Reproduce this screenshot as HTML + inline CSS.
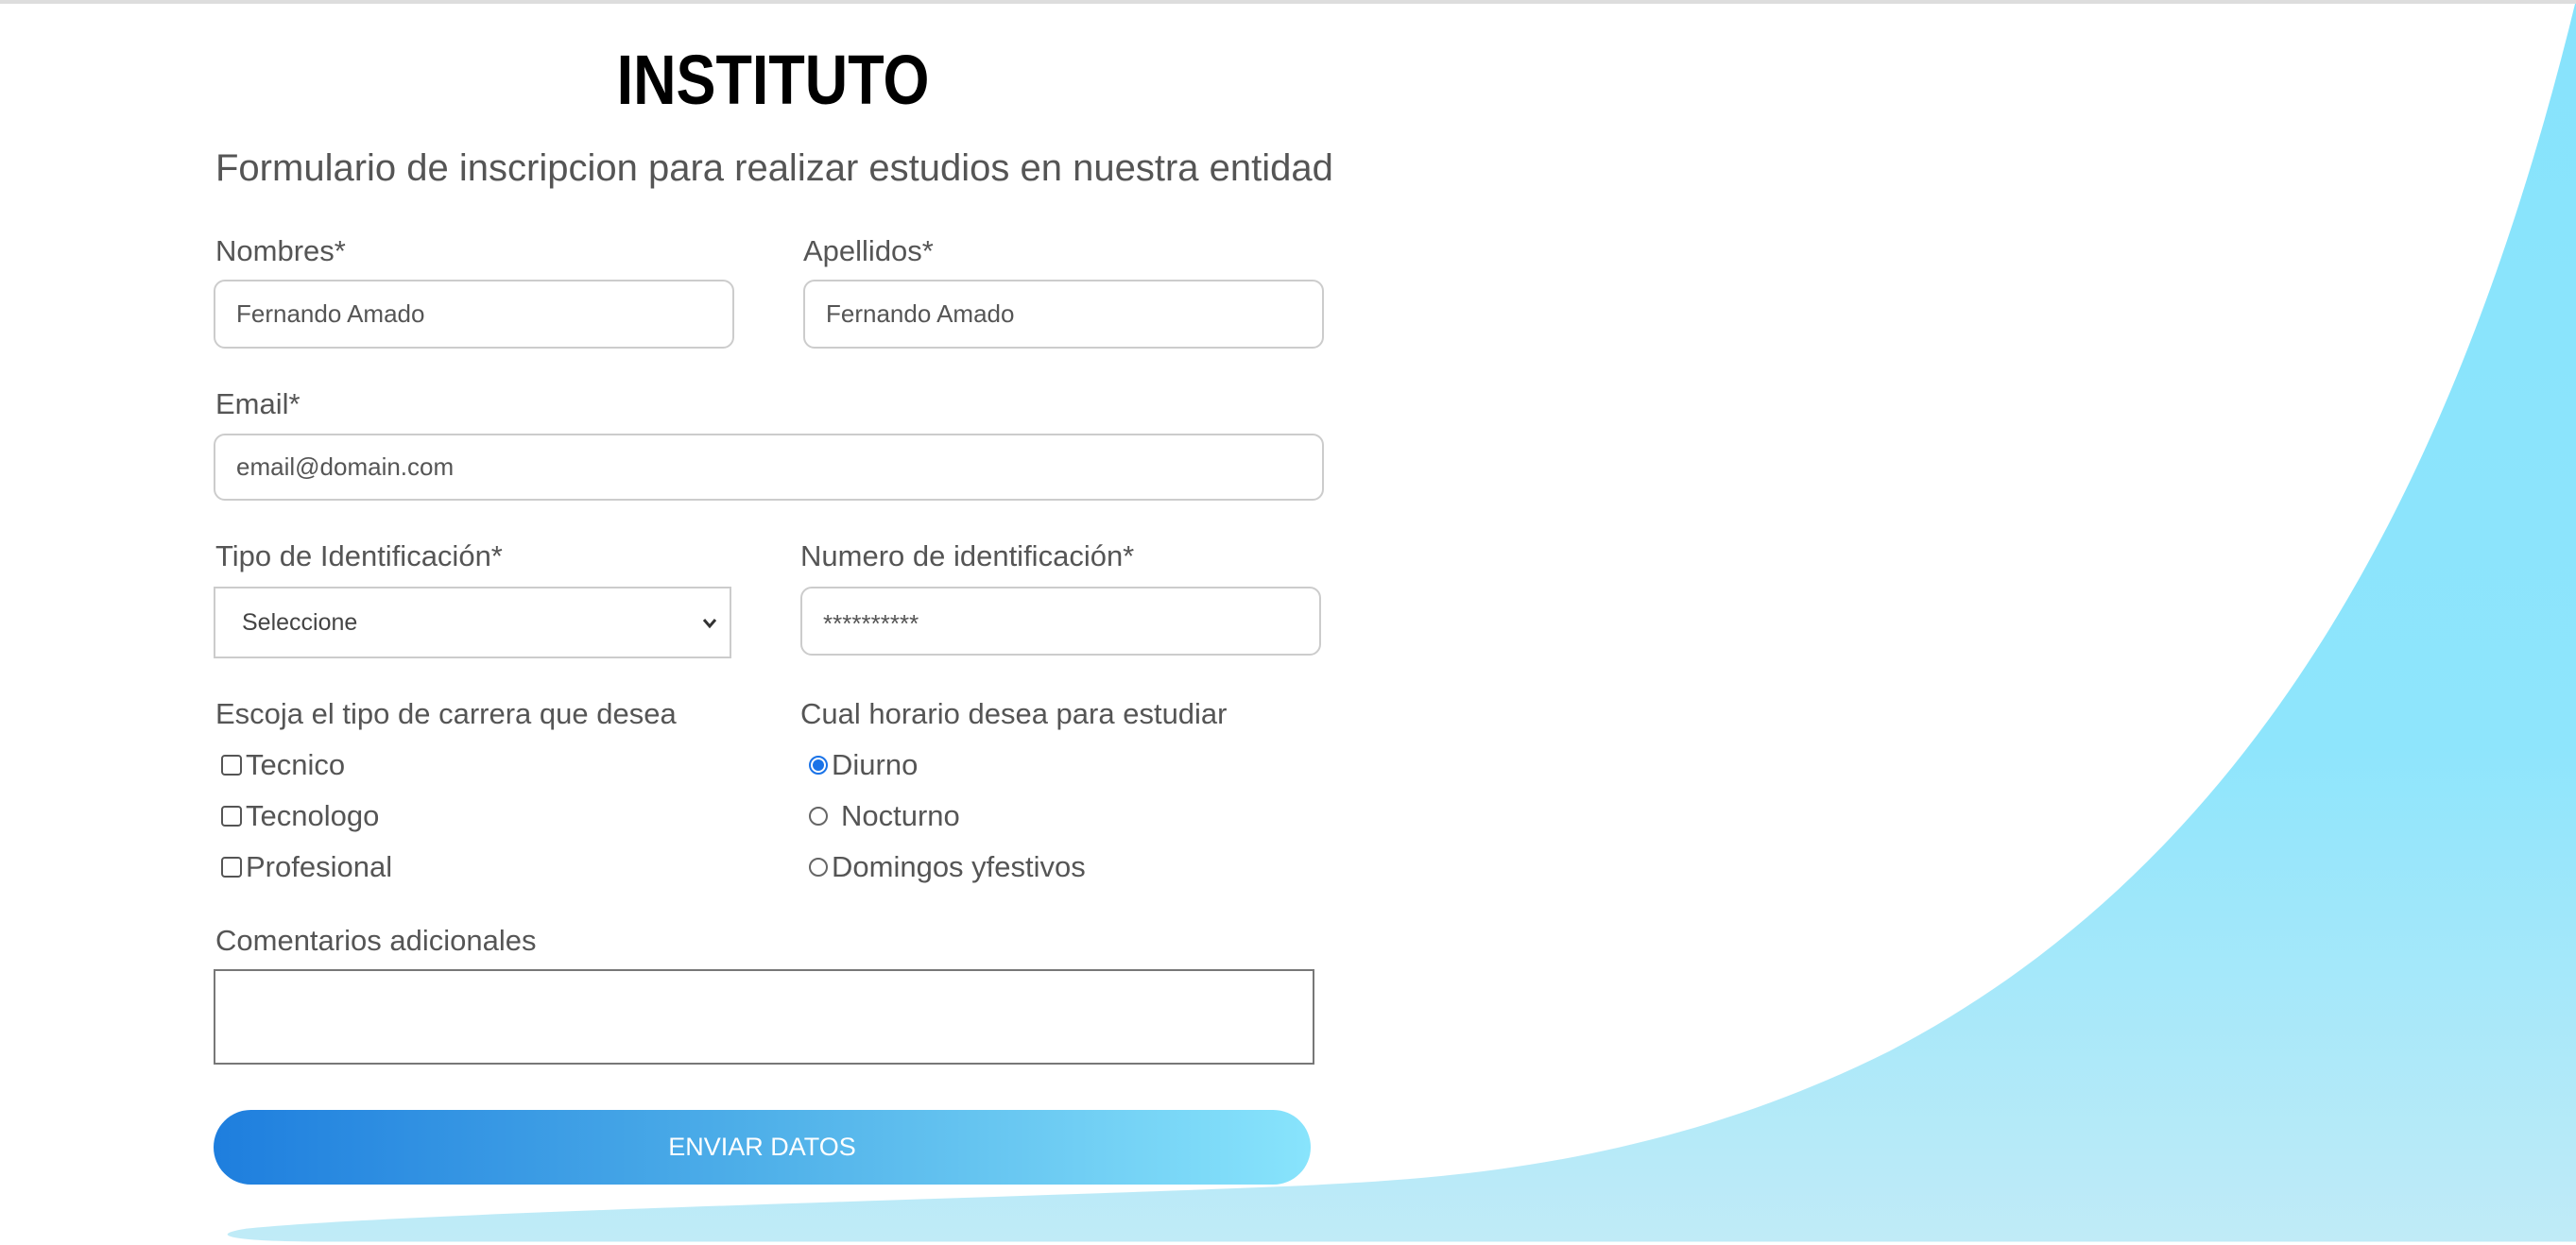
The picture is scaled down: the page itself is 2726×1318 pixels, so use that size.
<!DOCTYPE html>
<html><head><meta charset="utf-8"><style>
*{box-sizing:border-box;margin:0;padding:0}
body{width:2726px;height:1318px;background:#fff;position:relative;overflow:hidden;font-family:"Liberation Sans",Arial,sans-serif;color:#555}
.topline{position:absolute;left:0;top:0;width:2726px;height:4px;background:#ddd}
svg.wave{position:absolute;left:0;top:0}
.abs{position:absolute}
h1{position:absolute;left:560px;width:516px;text-align:center;top:42px;font-size:74px;font-weight:bold;color:#000;transform:scaleX(0.85)}
.sub{left:228px;top:156px;font-size:40px;color:#555;white-space:nowrap}
.lbl{font-size:31px;color:#555;white-space:nowrap}
.inp{border:2px solid #ccc;border-radius:12px;font-size:26px;color:#555;padding-left:22px;display:flex;align-items:center;background:#fff}
.sel{border:2px solid #ccc;background:#fff;font-size:25px;color:#444;padding-left:28px;display:flex;align-items:center}
.cb{width:22px;height:22px;border:2px solid #555;border-radius:4px;display:inline-block}
.rd{width:20px;height:20px;border:2px solid #666;border-radius:50%;display:inline-block}
.rdon{width:20px;height:20px;border:2px solid #1a73e8;border-radius:50%;display:inline-block;position:relative}
.rdon:after{content:"";position:absolute;left:2px;top:2px;width:12px;height:12px;border-radius:50%;background:#1a73e8}
.opt{font-size:31px;color:#555;display:flex;align-items:center;gap:4px;white-space:nowrap}
.ta{left:226px;top:1026px;width:1165px;height:101px;border:2px solid #777;background:#fff}
.btn{left:226px;top:1175px;width:1161px;height:79px;border-radius:40px;background:linear-gradient(90deg,#1e7ede,#4fb0e9 50%,#88e4fc);color:#fff;font-size:27px;display:flex;align-items:center;justify-content:center}
</style></head><body>
<svg class="wave" width="2726" height="1318" viewBox="0 0 1568 758" preserveAspectRatio="none">
<defs><linearGradient id="g" x1="0" y1="0" x2="0" y2="1"><stop offset="0" stop-color="#87e3fc"/><stop offset="0.6" stop-color="#8ee5fc"/><stop offset="1" stop-color="#c0ebf7"/></linearGradient></defs>
<path d="M1568,0 C1500,280 1380,520 1150,640 C1000,715 860,718 790,722 C600,730 250,738 150,748 C125,752 140,756 200,756 L1568,756 Z" fill="url(#g)"/>
</svg>
<div class="topline"></div>
<h1>INSTITUTO</h1>
<div class="abs sub">Formulario de inscripcion para realizar estudios en nuestra entidad</div>
<div class="abs lbl" style="left:228px;top:248px">Nombres*</div>
<div class="abs lbl" style="left:850px;top:248px">Apellidos*</div>
<div class="abs inp" style="left:226px;top:296px;width:551px;height:73px">Fernando Amado</div>
<div class="abs inp" style="left:850px;top:296px;width:551px;height:73px">Fernando Amado</div>
<div class="abs lbl" style="left:228px;top:410px">Email*</div>
<div class="abs inp" style="left:226px;top:459px;width:1175px;height:71px">email@domain.com</div>
<div class="abs lbl" style="left:228px;top:571px">Tipo de Identificación*</div>
<div class="abs lbl" style="left:847px;top:571px">Numero de identificación*</div>
<div class="abs sel" style="left:226px;top:621px;width:548px;height:76px">Seleccione<svg style="position:absolute;right:12px;top:30px" width="18" height="14" viewBox="0 0 18 14"><path d="M3 3 L9 10 L15 3" stroke="#333" stroke-width="3" fill="none"/></svg></div>
<div class="abs inp" style="left:847px;top:621px;width:551px;height:73px;align-items:flex-start;padding-top:22px">**********</div>
<div class="abs lbl" style="left:228px;top:738px">Escoja el tipo de carrera que desea</div>
<div class="abs lbl" style="left:847px;top:738px">Cual horario desea para estudiar</div>
<div class="abs opt" style="left:234px;top:792px"><span class="cb"></span>Tecnico</div>
<div class="abs opt" style="left:234px;top:846px"><span class="cb"></span>Tecnologo</div>
<div class="abs opt" style="left:234px;top:900px"><span class="cb"></span>Profesional</div>
<div class="abs opt" style="left:856px;top:792px"><span class="rdon"></span>Diurno</div>
<div class="abs opt" style="left:856px;top:846px;gap:14px"><span class="rd"></span>Nocturno</div>
<div class="abs opt" style="left:856px;top:900px"><span class="rd"></span>Domingos yfestivos</div>
<div class="abs lbl" style="left:228px;top:978px">Comentarios adicionales</div>
<div class="abs ta"></div>
<div class="abs btn">ENVIAR DATOS</div>
</body></html>
